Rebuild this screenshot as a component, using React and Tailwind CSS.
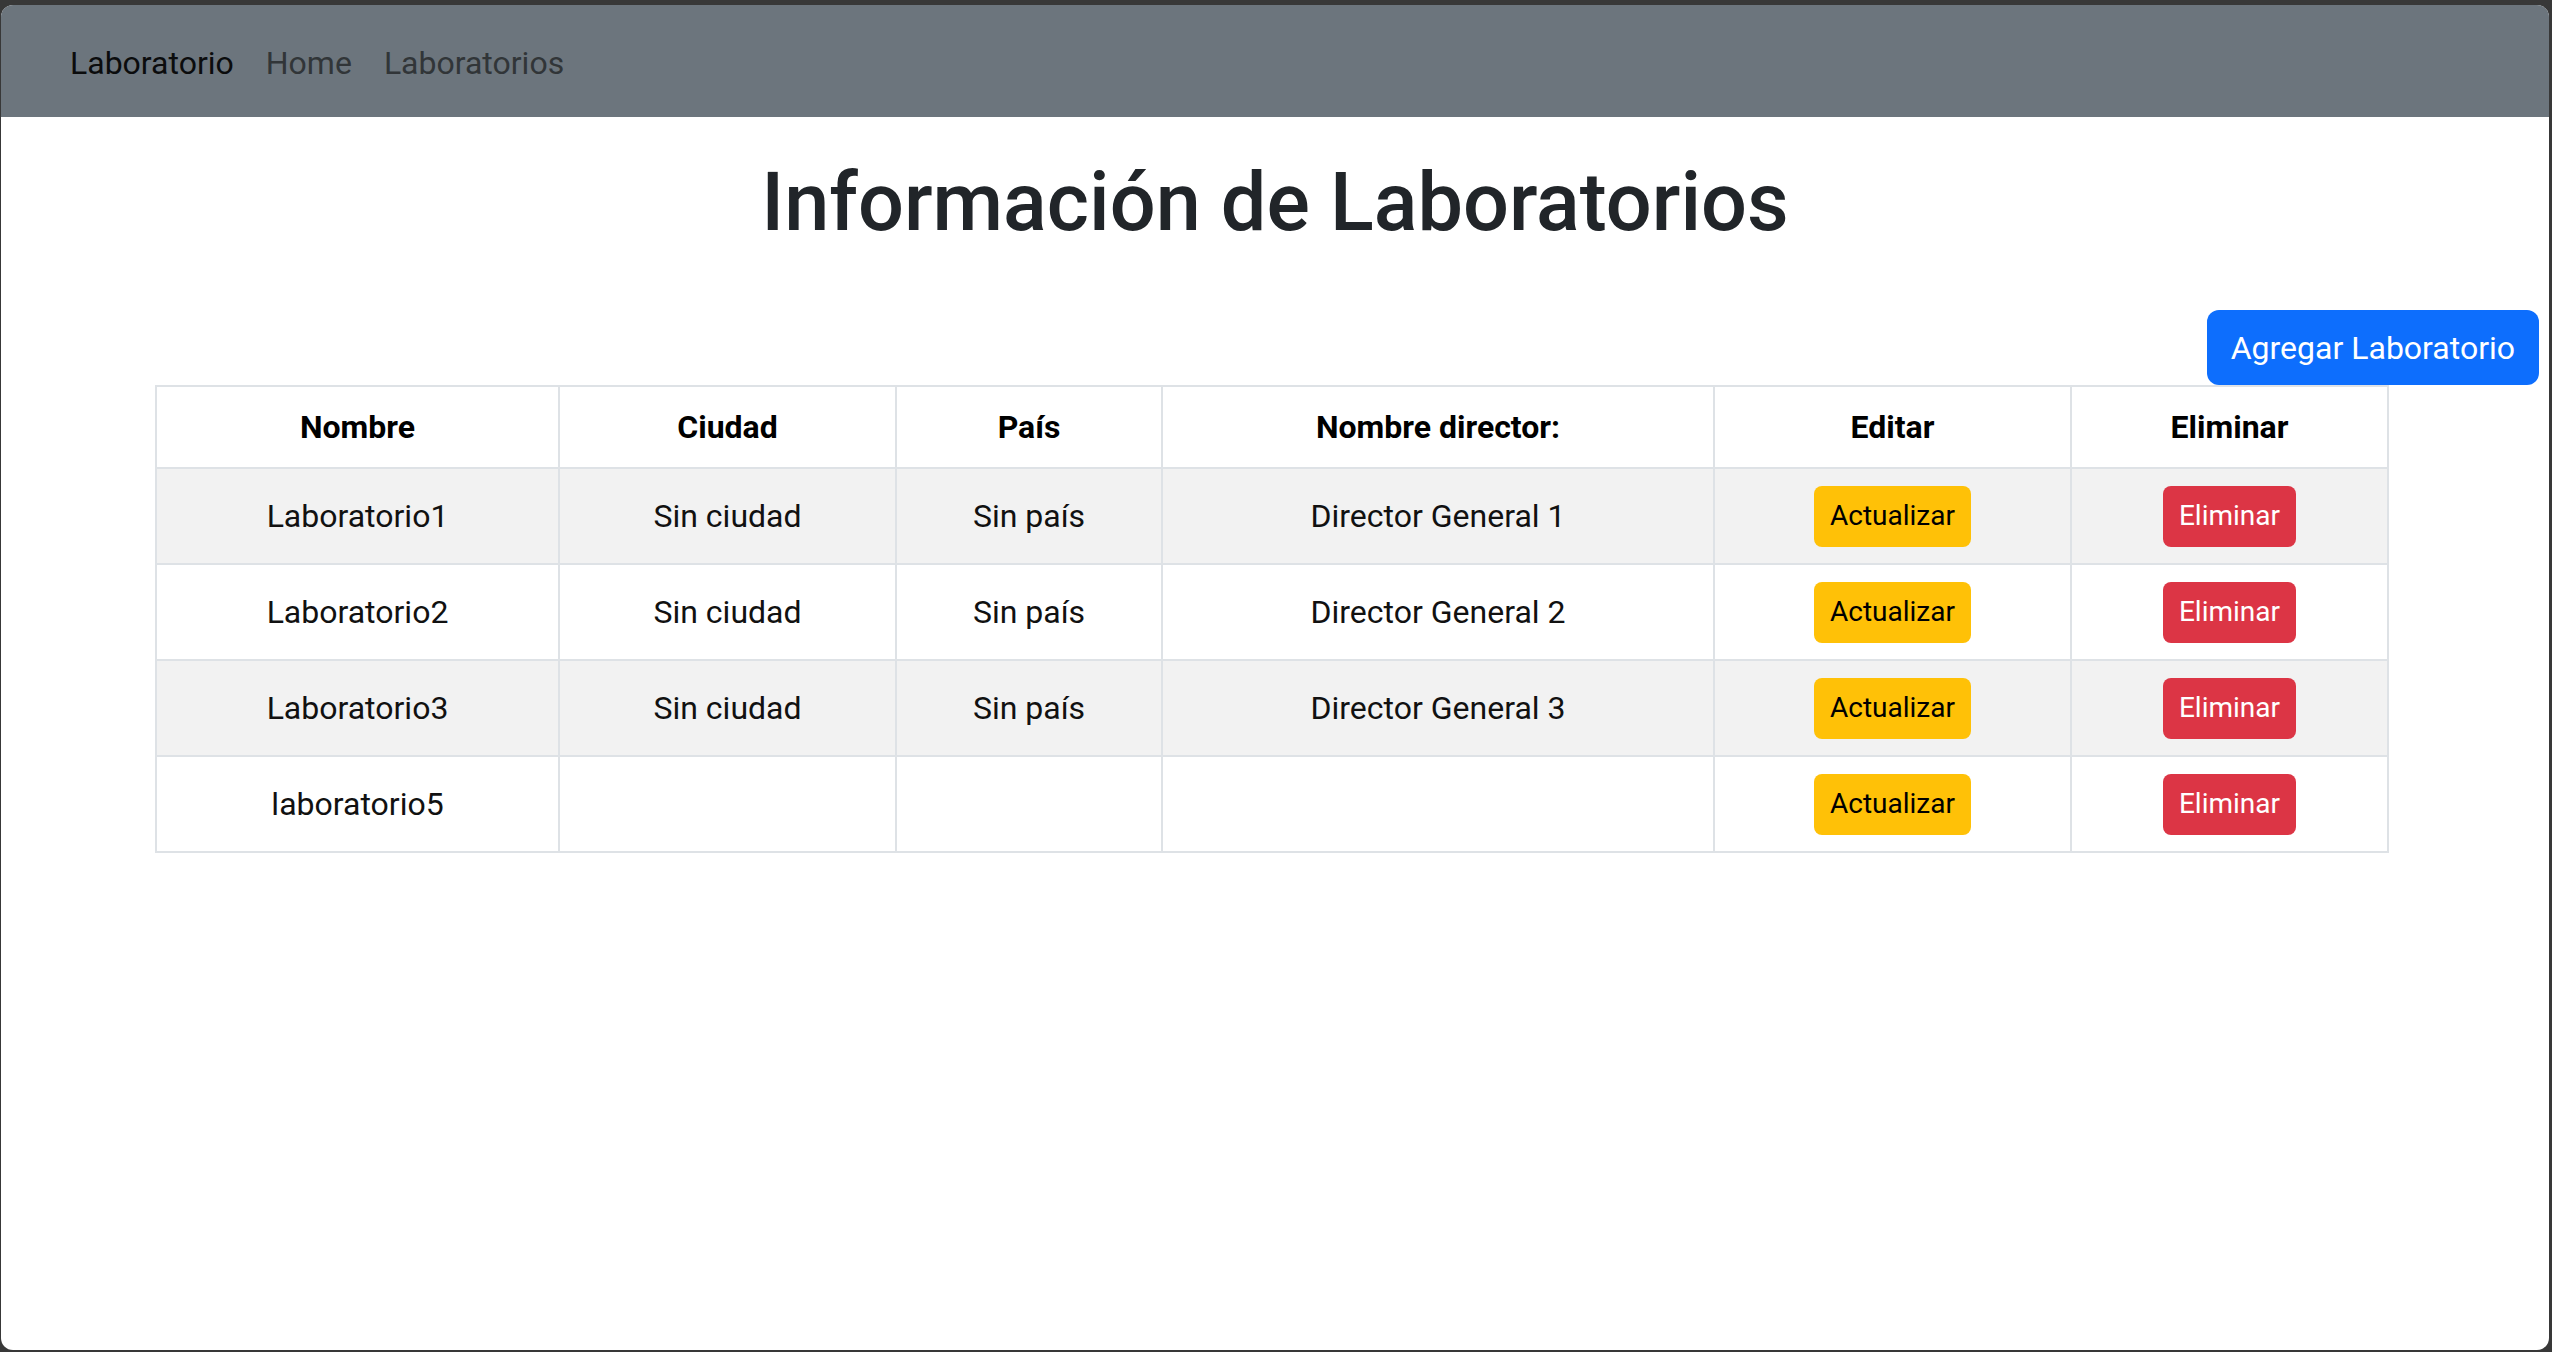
import React from 'react';

const labs = [
  { nombre: 'Laboratorio1', ciudad: 'Sin ciudad', pais: 'Sin país', director: 'Director General 1' },
  { nombre: 'Laboratorio2', ciudad: 'Sin ciudad', pais: 'Sin país', director: 'Director General 2' },
  { nombre: 'Laboratorio3', ciudad: 'Sin ciudad', pais: 'Sin país', director: 'Director General 3' },
  { nombre: 'laboratorio5', ciudad: '', pais: '', director: '' },
];

export default function App() {
  return (
    <div className="w-[2552px] h-[1352px] bg-[#383838] pt-[5px] pl-px pr-[3px] pb-[2px] font-['Roboto','Liberation_Sans',sans-serif]">
      <div className="h-full bg-white rounded-[12px] overflow-hidden flex flex-col">
        {/* Navbar */}
        <nav className="h-[112px] bg-[#6c757d] flex items-center pl-[53px] pt-[3px] text-[32px] leading-[48px]">
          <a className="px-[16px] text-[#0b0c0d]">Laboratorio</a>
          <a className="px-[16px] text-[#313538]">Home</a>
          <a className="px-[16px] text-[#313538]">Laboratorios</a>
        </nav>

        {/* Title */}
        <h1 className="mt-[38px] text-center text-[81px] leading-[96px] font-medium text-[#212529]">
          Información de Laboratorios
        </h1>

        {/* Add button */}
        <div className="flex justify-end pr-[10px] mt-[59px]">
          <button className="h-[75px] px-[24px] rounded-[12px] bg-[#0d6efd] text-white text-[32px] leading-[48px]">
            Agregar Laboratorio
          </button>
        </div>

        {/* Table */}
        <div className="pl-[154px]">
          <table className="table-fixed border-collapse w-[2232px] text-[32px] leading-[48px] text-[#111] text-center">
            <colgroup>
              <col className="w-[403px]" />
              <col className="w-[337px]" />
              <col className="w-[266px]" />
              <col className="w-[552px]" />
              <col className="w-[357px]" />
              <col className="w-[317px]" />
            </colgroup>
            <thead>
              <tr className="h-[82px]">
                {['Nombre', 'Ciudad', 'País', 'Nombre director:', 'Editar', 'Eliminar'].map((h) => (
                  <th key={h} className="border-2 border-[#dee2e6] font-bold text-black align-middle">{h}</th>
                ))}
              </tr>
            </thead>
            <tbody>
              {labs.map((lab, i) => (
                <tr key={lab.nombre} className={`h-[96px] ${i % 2 === 0 ? 'bg-[#f2f2f2]' : 'bg-white'}`}>
                  <td className="border-2 border-[#dee2e6] align-middle">{lab.nombre}</td>
                  <td className="border-2 border-[#dee2e6] align-middle">{lab.ciudad}</td>
                  <td className="border-2 border-[#dee2e6] align-middle">{lab.pais}</td>
                  <td className="border-2 border-[#dee2e6] align-middle">{lab.director}</td>
                  <td className="border-2 border-[#dee2e6] align-middle">
                    <button className="h-[61px] px-[16px] rounded-[8px] bg-[#ffc107] text-black text-[28px] leading-[42px]">Actualizar</button>
                  </td>
                  <td className="border-2 border-[#dee2e6] align-middle">
                    <button className="h-[61px] px-[16px] rounded-[8px] bg-[#dc3545] text-white text-[28px] leading-[42px]">Eliminar</button>
                  </td>
                </tr>
              ))}
            </tbody>
          </table>
        </div>
      </div>
    </div>
  );
}
